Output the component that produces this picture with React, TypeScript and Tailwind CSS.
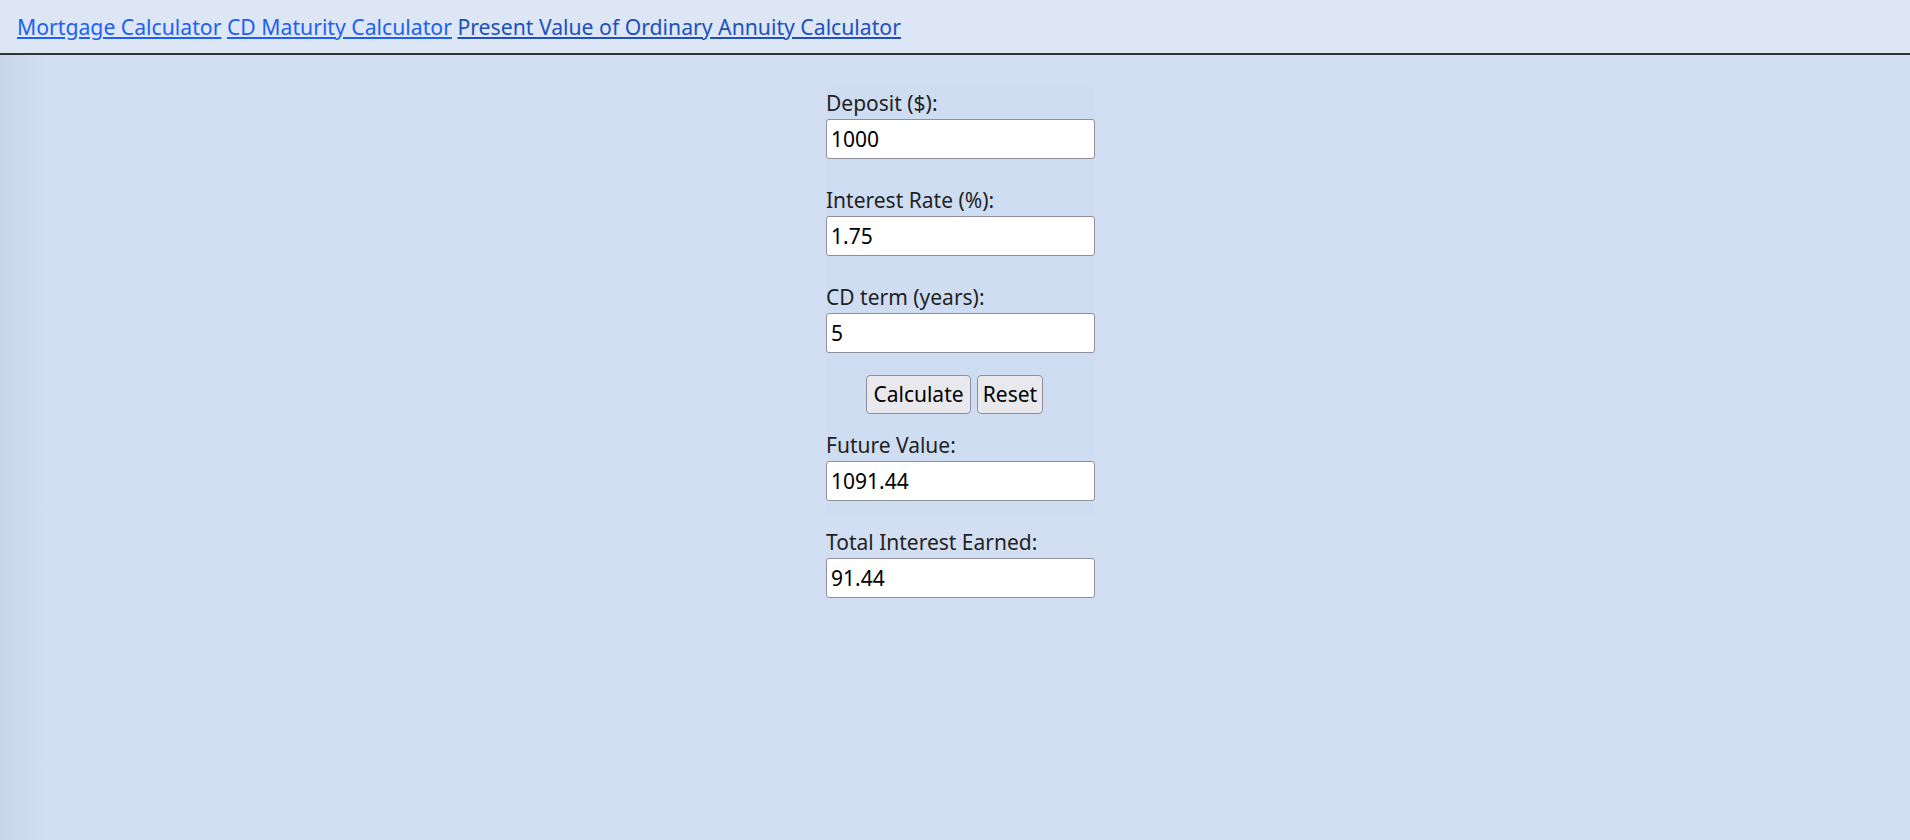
import React from 'react'

const fields = [
  { label: 'Deposit ($):', value: '1000' },
  { label: 'Interest Rate (%):', value: '1.75' },
  { label: 'CD term (years):', value: '5' },
]

const inputCls =
  'mt-[3px] block h-[40px] w-[269px] rounded-[3px] border border-[#8f8f9d] bg-white px-[4px] text-[21px] text-black outline-none'

const btnCls =
  'h-[39px] rounded-[4px] border border-[#8f8f9d] bg-[#e9e9ed] text-[21px] leading-none text-black'

export default function App() {
  return (
    <div className="min-h-screen bg-[#d2dff2] bg-[linear-gradient(to_right,#c8d5ea,#d2dff2_45px)] font-['Noto_Sans','Open_Sans',sans-serif] text-[21px] leading-[26px]">
      <nav className="flex h-[55px] items-center border-b-2 border-[#333] bg-[#dce6f4] pl-[17px] text-[21.2px]">
        <a href="#" className="text-[#1f5ff5] underline">
          Mortgage Calculator
        </a>
        <span>&nbsp;</span>
        <a href="#" className="text-[#1f5ff5] underline">
          CD Maturity Calculator
        </a>
        <span>&nbsp;</span>
        <a href="#" className="text-[#2150bd] underline">
          Present Value of Ordinary Annuity Calculator
        </a>
      </nav>

      <div className="flex justify-center pl-[11px] pt-[32px]">
        <div>
          <form className="w-[269px] bg-[#cfddf2] pt-[3px] pb-[14px]" onSubmit={(e) => e.preventDefault()}>
            {fields.map((f, i) => (
              <div key={f.label} className={i === 0 ? '' : 'mt-[28px]'}>
                <label className="block text-[#222]">{f.label}</label>
                <input className={inputCls} defaultValue={f.value} />
              </div>
            ))}

            <div className="mt-[22px] flex gap-[6px] pl-[40px]">
              <button type="submit" className={`${btnCls} w-[105px]`}>
                Calculate
              </button>
              <button type="reset" className={`${btnCls} w-[66px]`}>
                Reset
              </button>
            </div>

            <div className="mt-[18px]">
              <label className="block text-[#222]">Future Value:</label>
              <input className={inputCls} defaultValue="1091.44" readOnly />
            </div>
          </form>

          <div className="mt-[14px]">
            <label className="block text-[#222]">Total Interest Earned:</label>
            <input className={inputCls} defaultValue="91.44" readOnly />
          </div>
        </div>
      </div>
    </div>
  )
}
